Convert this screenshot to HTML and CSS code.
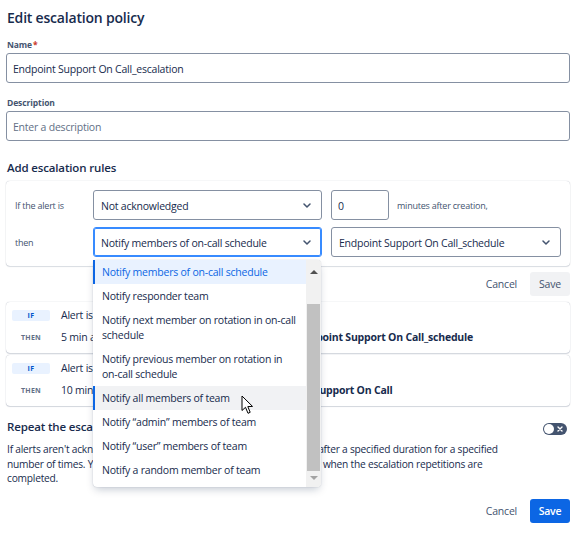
FILE: index.html
```html
<!DOCTYPE html>
<html>
<head>
<meta charset="utf-8">
<link rel="stylesheet" href="styles.css">
</head>
<body>
<div class="page">
  <h1 class="title">Edit escalation policy</h1>
  <div class="field">
    <div class="label">Name<span class="req">*</span></div>
    <div class="input">Endpoint Support On Call_escalation</div>
  </div>
  <div class="field field-desc">
    <div class="label">Description</div>
    <div class="input placeholder">Enter a description</div>
  </div>
  <h2 class="section">Add escalation rules</h2>
  <div class="rule-card">
    <div class="rule-row">
      <span class="rule-label">If the alert is</span>
      <div class="select sel-a"><span>Not acknowledged</span><svg class="chev" width="8" height="5" viewBox="0 0 8 5"><path d="M1 1L4 4L7 1" fill="none" stroke="#44546f" stroke-width="1.5" stroke-linecap="round" stroke-linejoin="round"/></svg></div>
      <div class="num">0</div>
      <span class="hint">minutes after creation,</span>
    </div>
    <div class="rule-row">
      <span class="rule-label">then</span>
      <div class="select-wrap">
        <div class="select sel-a focused"><span>Notify members of on-call schedule</span><svg class="chev" width="8" height="5" viewBox="0 0 8 5"><path d="M1 1L4 4L7 1" fill="none" stroke="#44546f" stroke-width="1.5" stroke-linecap="round" stroke-linejoin="round"/></svg></div>
        <div class="menu">
          <div class="options">
            <div class="opt selected">Notify members of on-call schedule</div>
            <div class="opt">Notify responder team</div>
            <div class="opt">Notify next member on rotation in on-call schedule</div>
            <div class="opt">Notify previous member on rotation in on-call schedule</div>
            <div class="opt hover">Notify all members of team</div>
            <div class="opt">Notify “admin” members of team</div>
            <div class="opt">Notify “user” members of team</div>
            <div class="opt">Notify a random member of team</div>
          </div>
          <div class="scrollbar">
            <div class="arrow up"></div>
            <div class="thumb"></div>
            <div class="arrow down"></div>
          </div>
          <svg class="cursor" width="13" height="20" viewBox="0 0 13 20"><path d="M1 1L1 15.5L4.5 12.3L7 18.3L9.2 17.3L6.8 11.6L11.5 11.4Z" fill="#fff" stroke="#000" stroke-width="1" stroke-linejoin="round"/></svg>
        </div>
      </div>
      <div class="select sel-b"><span>Endpoint Support On Call_schedule</span><svg class="chev" width="8" height="5" viewBox="0 0 8 5"><path d="M1 1L4 4L7 1" fill="none" stroke="#44546f" stroke-width="1.5" stroke-linecap="round" stroke-linejoin="round"/></svg></div>
    </div>
  </div>
  <div class="actions actions-rule">
    <span class="btn-link">Cancel</span>
    <span class="btn btn-subtle">Save</span>
  </div>
  <div class="rule-item">
    <div class="ri-row"><span class="badge b-if">IF</span><span class="ri-text">Alert is not acknowledged</span></div>
    <div class="ri-row"><span class="badge b-then">THEN</span><span class="ri-text">5 min after creation, notify all on-call people in the <b>Endpoint Support On Call_schedule</b></span></div>
  </div>
  <div class="rule-item">
    <div class="ri-row"><span class="badge b-if">IF</span><span class="ri-text">Alert is not acknowledged</span></div>
    <div class="ri-row"><span class="badge b-then">THEN</span><span class="ri-text">10 min after creation, notify all members of <b>Endpoint Support On Call</b></span></div>
  </div>
  <div class="repeat">
    <div class="repeat-body">
      <h3 class="repeat-title">Repeat the escalation</h3>
      <p class="repeat-text">If alerts aren't acknowledged or resolved, repeat the escalation rules after a specified duration for a specified<br>number of times. You can also choose to close the alert automatically when the escalation repetitions are<br>completed.</p>
    </div>
    <div class="toggle"><span class="knob"></span><svg class="tx" width="6" height="6" viewBox="0 0 6 6"><path d="M1 1L5 5M5 1L1 5" stroke="#fff" stroke-width="1.4" stroke-linecap="round"/></svg></div>
  </div>
  <div class="actions actions-foot">
    <span class="btn-link">Cancel</span>
    <span class="btn btn-primary">Save</span>
  </div>
</div>
</body>
</html>
```

FILE: styles.css
```css
* { box-sizing: border-box; }
html, body { margin: 0; padding: 0; background: #fff; }
body {
  font-family: "Open Sans", "Noto Sans", sans-serif;
  color: #172b4d;
  font-size: 10.5px;
  letter-spacing: -0.22px;
  width: 587px;
  height: 540px;
  overflow: hidden;
}
.page { padding: 0 17px 0 6px; }
.title {
  margin: 0;
  padding: 7px 0 0 1px;
  font-size: 14px;
  font-weight: 600;
  letter-spacing: -0.2px;
  line-height: 22px;
  height: 38px;
}
.field { display: flex; flex-direction: column; }
.label {
  font-size: 8.5px;
  font-weight: 700;
  letter-spacing: -0.1px;
  color: #44546f;
  line-height: 14px;
  padding-left: 1px;
  margin-bottom: 1px;
}
.req { color: #c9372c; margin-left: 1px; }
.input {
  height: 30px;
  border: 1px solid #8590a2;
  border-radius: 3px;
  padding: 1px 6px 0;
  display: flex;
  align-items: center;
}
.placeholder { color: #626f86; }
.field-desc { margin-top: 13px; }
.section {
  margin: 0;
  padding: 19px 0 0 1px;
  font-size: 11.5px;
  font-weight: 600;
  letter-spacing: -0.15px;
  line-height: 16px;
  height: 40px;
}
.rule-card {
  border-radius: 4px;
  box-shadow: 0 0 1px rgba(9,30,66,0.35), 0 1px 1px rgba(9,30,66,0.12);
  padding: 9px 8px 9px 9px;
  display: flex;
  flex-direction: column;
  gap: 7px;
  height: 85px;
}
.rule-row { display: flex; align-items: center; height: 30px; }
.rule-label { width: 78px; font-size: 9px; color: #44546f; padding-top: 1px; }
.select-wrap { position: relative; }
.select {
  height: 30px;
  border: 1px solid #8590a2;
  border-radius: 3px;
  display: flex;
  align-items: center;
  justify-content: space-between;
  padding: 1px 10px 0 7px;
}
.sel-a { width: 229px; }
.select.focused { border-color: #388bff; box-shadow: inset 0 0 0 1px #388bff; }
.sel-b { width: 230px; margin-left: 9px; }
.rule-row .sel-a + .num { margin-left: 9px; }
.num {
  width: 58px;
  height: 30px;
  border: 1px solid #8590a2;
  border-radius: 3px;
  display: flex;
  align-items: center;
  padding: 1px 6px 0;
}
.hint { margin-left: 8px; font-size: 9px; color: #44546f; padding-top: 1px; }
.chev { flex: none; }
.actions {
  display: flex;
  justify-content: flex-end;
  align-items: center;
  gap: 13px;
}
.actions-rule { margin-top: 6px; height: 24px; }
.btn-link { color: #44546f; }
.btn {
  height: 24px;
  width: 40px;
  border-radius: 3px;
  display: flex;
  align-items: center;
  justify-content: center;
}
.btn-subtle { background: #f1f2f4; color: #44546f; }
.btn-primary { background: #0c66e4; color: #fff; font-weight: 600; }
.rule-item {
  margin-top: 6px;
  border-radius: 4px;
  box-shadow: 0 0 1px rgba(9,30,66,0.35), 0 1px 1px rgba(9,30,66,0.15);
  padding: 2px 6px 5px;
  height: 51px;
}
.rule-item + .rule-item { margin-top: 2px; }
.ri-row { display: flex; align-items: center; height: 22px; white-space: nowrap; }
.badge {
  width: 38px;
  height: 11px;
  border-radius: 2px;
  font-size: 7px;
  font-weight: 700;
  display: flex;
  align-items: center;
  justify-content: center;
  margin-right: 11px;
  letter-spacing: 0.3px;
}
.b-if { background: #e9f2ff; color: #0055cc; }
.b-then { color: #626f86; }
.ri-text b { font-weight: 700; }
.repeat { display: flex; justify-content: space-between; margin-top: 13px; }
.repeat-title {
  margin: 0;
  font-size: 11.5px;
  font-weight: 600;
  letter-spacing: -0.15px;
  line-height: 16px;
  padding-left: 1px;
}
.repeat-text {
  margin: 7px 0 0;
  padding-left: 1px;
  font-size: 10.2px;
  line-height: 14.5px;
  white-space: nowrap;
}
.toggle {
  margin-top: 4px;
  margin-right: 3px;
  width: 24px;
  height: 12px;
  border-radius: 6px;
  background: #44546f;
  display: flex;
  align-items: center;
  justify-content: space-between;
  padding: 0 4px 0 1px;
}
.knob { width: 10px; height: 10px; border-radius: 50%; background: #fff; }
.actions-foot { margin-top: 13px; height: 24px; }
.menu {
  position: absolute;
  left: 0;
  top: 33px;
  width: 228px;
  height: 227px;
  background: #fff;
  border-radius: 4px;
  box-shadow: 0 4px 8px -2px rgba(9,30,66,0.25), 0 0 1px rgba(9,30,66,0.31);
  display: flex;
  z-index: 10;
}
.options { flex: 1; padding: 0; }
.opt {
  padding: 4.5px 8px 4.5px 9px;
  line-height: 15px;
  color: #172b4d;
}
.opt.selected { background: #e9f2ff; color: #0c66e4; box-shadow: inset 2px 0 0 #0c66e4; }
.opt.hover { background: #f1f2f4; box-shadow: inset 2px 0 0 #0c66e4; }
.scrollbar {
  width: 15px;
  background: #f1f1f1;
  display: flex;
  flex-direction: column;
  align-items: center;
  padding-top: 10px;
  border-radius: 0 4px 4px 0;
}
.arrow { width: 0; height: 0; border-left: 4px solid transparent; border-right: 4px solid transparent; }
.arrow.up { border-bottom: 4px solid #505050; }
.arrow.down { border-top: 4px solid #a3a3a3; margin-top: 5px; }
.thumb { width: 13px; height: 167px; background: #c1c1c1; margin-top: 30px; }
.cursor { position: absolute; left: 148px; top: 135px; }
```
